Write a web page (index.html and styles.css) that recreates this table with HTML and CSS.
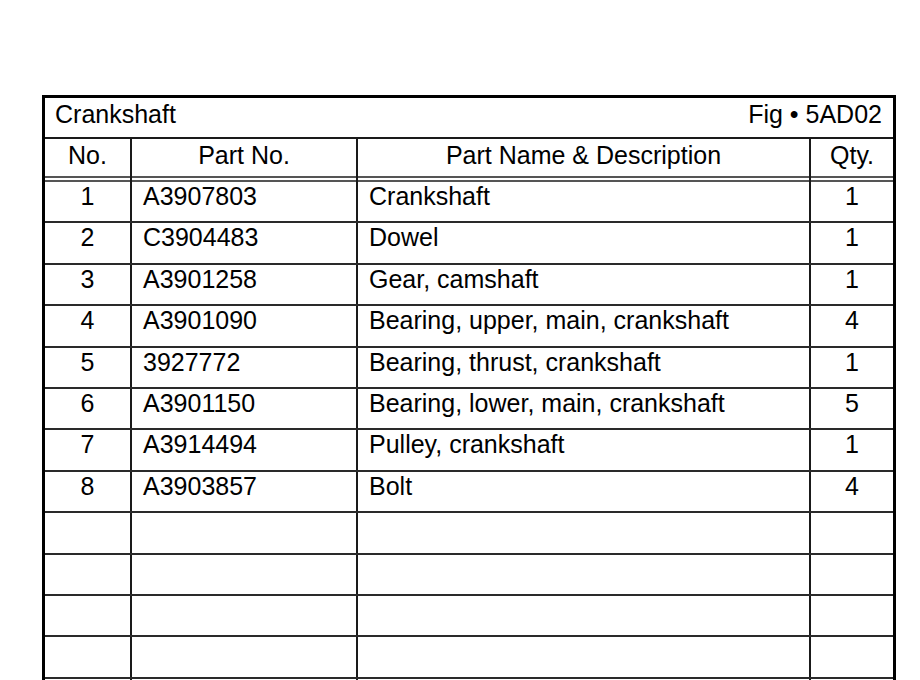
FILE: index.html
```html
<!DOCTYPE html>
<html lang="en">
<head>
<meta charset="utf-8">
<title>Crankshaft parts list</title>
<link rel="stylesheet" href="styles.css">
</head>
<body>
<div class="sheet">
  <div class="title">
    <span>Crankshaft</span>
    <span>Fig • 5AD02</span>
  </div>
  <div class="row head">
    <div class="cell c">No.</div>
    <div class="cell c">Part No.</div>
    <div class="cell c">Part Name &amp; Description</div>
    <div class="cell c">Qty.</div>
  </div>
  <div class="row"><div class="cell c">1</div><div class="cell">A3907803</div><div class="cell">Crankshaft</div><div class="cell c">1</div></div>
  <div class="row"><div class="cell c">2</div><div class="cell">C3904483</div><div class="cell">Dowel</div><div class="cell c">1</div></div>
  <div class="row"><div class="cell c">3</div><div class="cell">A3901258</div><div class="cell">Gear, camshaft</div><div class="cell c">1</div></div>
  <div class="row"><div class="cell c">4</div><div class="cell">A3901090</div><div class="cell">Bearing, upper, main, crankshaft</div><div class="cell c">4</div></div>
  <div class="row"><div class="cell c">5</div><div class="cell">3927772</div><div class="cell">Bearing, thrust, crankshaft</div><div class="cell c">1</div></div>
  <div class="row"><div class="cell c">6</div><div class="cell">A3901150</div><div class="cell">Bearing, lower, main, crankshaft</div><div class="cell c">5</div></div>
  <div class="row"><div class="cell c">7</div><div class="cell">A3914494</div><div class="cell">Pulley, crankshaft</div><div class="cell c">1</div></div>
  <div class="row"><div class="cell c">8</div><div class="cell">A3903857</div><div class="cell">Bolt</div><div class="cell c">4</div></div>
  <div class="row"><div class="cell"></div><div class="cell"></div><div class="cell"></div><div class="cell"></div></div>
  <div class="row"><div class="cell"></div><div class="cell"></div><div class="cell"></div><div class="cell"></div></div>
  <div class="row"><div class="cell"></div><div class="cell"></div><div class="cell"></div><div class="cell"></div></div>
  <div class="row"><div class="cell"></div><div class="cell"></div><div class="cell"></div><div class="cell"></div></div>
  <div class="row"><div class="cell"></div><div class="cell"></div><div class="cell"></div><div class="cell"></div></div>
</div>
</body>
</html>
```

FILE: styles.css
```css
html, body {
  margin: 0;
  padding: 0;
  background: #fff;
}

body {
  font-family: "Liberation Sans", Arial, sans-serif;
  font-size: 25px;
  line-height: 25px;
  color: #000;
  height: 680px;
  overflow: hidden;
}

.sheet {
  margin: 95px 0 0 42px;
  width: 854px;
  height: 585px;
  overflow: hidden;
  box-sizing: border-box;
  border: 3px solid #000;
  border-bottom: none;
}

.title {
  display: flex;
  justify-content: space-between;
  padding: 4px 11px 0 10px;
  height: 35px;
  border-bottom: 2px solid #1a1a1a;
}

.row {
  display: grid;
  grid-template-columns: 85px 226px 453px 1fr;
  height: 41.4px;
  box-sizing: border-box;
  border-bottom: 2px solid #2a2a2a;
}

.row.head {
  height: 43px;
  border-bottom: none;
  background: linear-gradient(to bottom,
    transparent 0, transparent 37px,
    #555 37px, #555 39px,
    #fff 39px, #fff 41px,
    #555 41px, #555 43px);
}

.cell {
  padding: 2px 11px 0;
  white-space: nowrap;
}

.head .cell {
  padding-top: 4px;
}

.cell + .cell {
  border-left: 2px solid #1a1a1a;
}

.cell.c {
  text-align: center;
  padding-left: 0;
  padding-right: 0;
}
```
